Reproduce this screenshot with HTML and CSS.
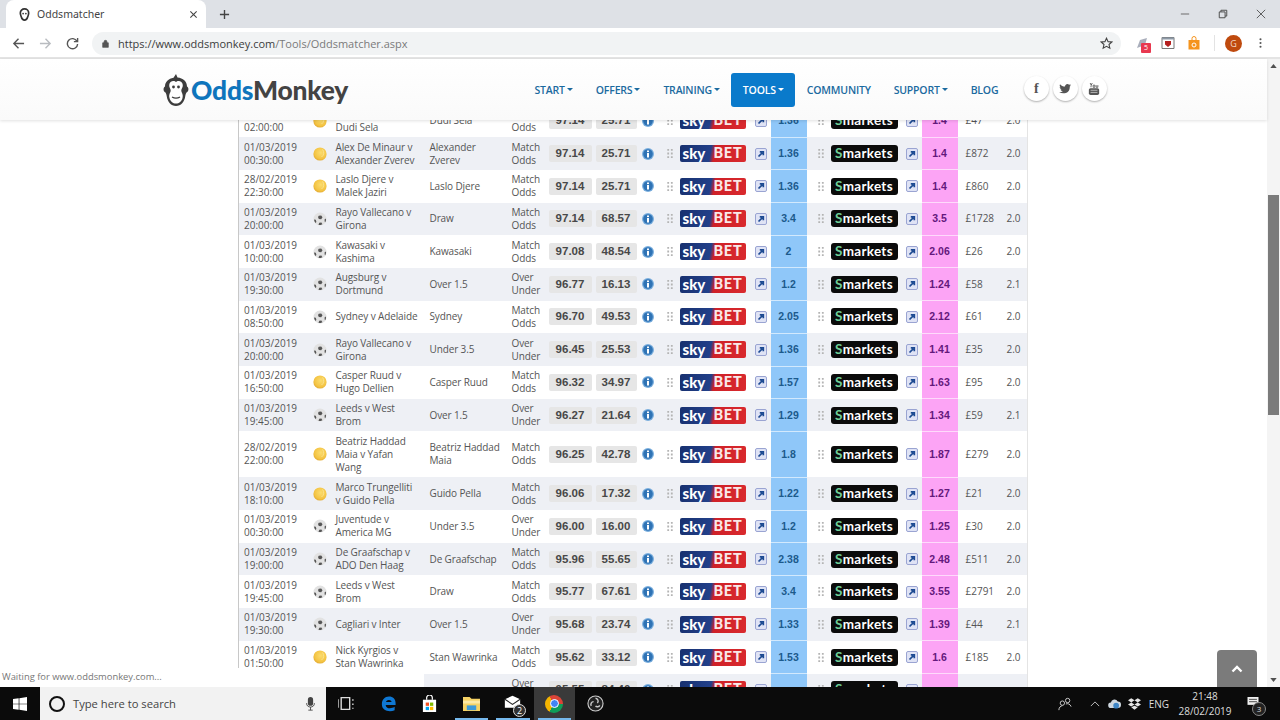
FILE: index.html
```html
<!DOCTYPE html>
<html lang="en">
<head>
    <meta charset="UTF-8">
    <title>Oddsmatcher</title>
    <link rel="stylesheet" href="styles.css">
</head>
<body>
    <svg class="defs" width="0" height="0">
        <symbol id="coin" viewBox="0 0 14 14">
            <defs><radialGradient id="coinfill" cx="55%" cy="40%" r="65%"><stop offset="0" stop-color="#fbdc6e"/><stop offset=".7" stop-color="#f4c443"/><stop offset="1" stop-color="#dfa52f"/></radialGradient></defs>
            <circle cx="7" cy="7" r="6.6" fill="url(#coinfill)"/>
            <path d="M9.5 2.5a5 5 0 0 1-1 7.5" fill="none" stroke="#fbe38e" stroke-width="1"/>
        </symbol>
        <symbol id="ball" viewBox="0 0 14 14">
            <circle cx="7" cy="7" r="6.5" fill="#e2e2e2"/>
            <path d="M5.8 3.800l2.400-.4 1.300 1.900-1.300 1.900-2.400-.2-.8-2zM1 7.500l1.800.2.600 2.200-1 1A6 6 0 0 1 1 7.500zM13 6.500l-1.500 1.100.3 2.400.5.200A6 6 0 0 0 13 6.500zM6.200 10.800l2.200-.2 1 1.600-1.700.9-2.200-.2z" fill="#555"/>
        </symbol>
        <symbol id="info" viewBox="0 0 12 12">
            <circle cx="6" cy="6" r="6" fill="#7aaedd"/>
            <circle cx="6" cy="6" r="4.800" fill="#2f73b5"/>
            <rect x="5" y="5" width="2" height="4.500" fill="#fff"/>
            <rect x="5" y="2.500" width="2" height="1.600" fill="#fff"/>
        </symbol>
        <symbol id="grip" viewBox="0 0 6 10">
            <path d="M0 0h2v2H0zM4 0h2v2H4zM0 4h2v2H0zM4 4h2v2H4zM0 8h2v2H0zM4 8h2v2H4z" fill="#b4b4b4"/>
        </symbol>
        <symbol id="out" viewBox="0 0 12 12">
            <rect x=".5" y=".5" width="11" height="11" rx="1.500" fill="#dfe3f5" stroke="#9aa4d2"/>
            <path d="M3.500 8.500l3.700-3.700M4.800 3.800H8.300V7.300" fill="none" stroke="#1c4a92" stroke-width="1.700"/>
        </symbol>
    </svg>

    <div class="tabbar">
        <div class="tab">
            <svg class="favicon" viewBox="0 0 14 14"><path d="M7 1a4.500 4.500 0 0 0-4.500 4.500c0 2 .7 3 1.200 4.500.5 2 1.700 3 3.300 3s2.800-1 3.300-3c.5-1.500 1.200-2.500 1.200-4.500A4.500 4.500 0 0 0 7 1z" fill="none" stroke="#333" stroke-width="1.800"/><circle cx="5.500" cy="6" r=".9" fill="#333"/><circle cx="8.500" cy="6" r=".9" fill="#333"/></svg>
            <span class="tab-title">Oddsmatcher</span>
            <svg class="tab-close" viewBox="0 0 10 10"><path d="M1.500 1.500l7 7M8.500 1.500l-7 7" stroke="#444" stroke-width="1.200"/></svg>
        </div>
        <svg class="newtab" viewBox="0 0 12 12"><path d="M6 1v10M1 6h10" stroke="#444" stroke-width="1.500"/></svg>
        <div class="winctl">
            <svg viewBox="0 0 12 12"><path d="M1 6h10" stroke="#555"/></svg>
            <svg viewBox="0 0 12 12"><path d="M1.500 3.500h7v7h-7zM3.500 3.500v-2h7v7h-2" fill="none" stroke="#444" stroke-width="1.100"/></svg>
            <svg viewBox="0 0 12 12"><path d="M1 1l10 10M11 1L1 11" stroke="#444"/></svg>
        </div>
    </div>

    <div class="toolbar">
        <svg class="tb-icon" viewBox="0 0 14 14"><path d="M13 7H2M7 2L2 7l5 5" fill="none" stroke="#555" stroke-width="1.500"/></svg>
        <svg class="tb-icon" viewBox="0 0 14 14"><path d="M1 7h11M7 2l5 5-5 5" fill="none" stroke="#b9bcc0" stroke-width="1.500"/></svg>
        <svg class="tb-icon" viewBox="0 0 14 14"><path d="M11.800 4.500A5.500 5.500 0 1 0 12.500 7.500M12.500 1v4h-4" fill="none" stroke="#555" stroke-width="1.500"/></svg>
        <div class="omnibox">
            <svg class="lock" viewBox="0 0 10 12"><path d="M1 5h8v6.500H1zM3 5V3.500a2 2 0 0 1 4 0V5" fill="#555" stroke="#555"/></svg>
            <span class="url"><span class="url-dark">https://www.oddsmonkey.com</span>/Tools/Oddsmatcher.aspx</span>
            <svg class="star" viewBox="0 0 14 14"><path d="M7 1.300l1.700 3.700 4 .4-3 2.700.9 4L7 10l-3.600 2.100.9-4-3-2.700 4-.4z" fill="none" stroke="#444" stroke-width="1.200"/></svg>
        </div>
        <div class="exts">
            <span class="ext-puzzle">
                <svg viewBox="0 0 14 14"><path d="M2 12L5 4l7-2-2 7z" fill="#a9aebb"/></svg>
                <span class="ext-count">5</span>
            </span>
            <svg class="ext" viewBox="0 0 14 14"><path d="M1 1.500h12v11H1z" fill="#fff" stroke="#777"/><path d="M1 1.500h12v2H1z" fill="#8d99a6"/><path d="M4 5h6v3.500L7 11 4 8.500z" fill="#b5201f"/></svg>
            <svg class="ext" viewBox="0 0 14 14"><path d="M1.500 4h11v9.500h-11z" fill="#f5941e"/><path d="M5 4.500V2.500a2 2 0 0 1 4 0v2" fill="none" stroke="#f5941e"/><circle cx="7" cy="9" r="2" fill="none" stroke="#fff"/></svg>
            <span class="tb-sep"></span>
            <span class="avatar">G</span>
            <svg class="kebab" viewBox="0 0 4 14"><circle cx="2" cy="2" r="1.400" fill="#555"/><circle cx="2" cy="7" r="1.400" fill="#555"/><circle cx="2" cy="12" r="1.400" fill="#555"/></svg>
        </div>
    </div>

    <div class="viewport">
        <div class="page">
            <header class="site-header">
                <a class="logo">
                    <svg class="monkey" viewBox="0 0 26 32"><path d="M13 0l1.500 3.500C20 4 24 7.500 24 12.500c2 1 2 5-.5 6-.5 1-1 2-1.200 3.500-.8 6-4.300 10-9.300 10S4.500 28 3.700 22c-.2-1.500-.7-2.500-1.200-3.500C0 17.500 0 13.500 2 12.500 2 8 5.500 4.500 10.500 3.800z" fill="#3d3d3d"/><path d="M13 8c-1.200-1.800-6.500-1.800-6.800 3-.2 2.500 1.500 3.500 1.500 5.500S5.500 20 6.500 24c.8 3.500 3.500 5.500 6.500 5.500s5.700-2 6.500-5.500c1-4-1.200-5.500-1.200-7.500s1.700-3 1.500-5.500C19.500 6.200 14.200 6.200 13 8z" fill="#fff"/><circle cx="10.500" cy="13" r="1.400" fill="#3d3d3d"/><circle cx="15.500" cy="13" r="1.400" fill="#3d3d3d"/><path d="M9 23c2.500 1.500 5.500 1.500 8 0" fill="none" stroke="#3d3d3d" stroke-width="1.200"/></svg>
                    <span class="logo-text"><span class="logo-blue">Odds</span>Monkey</span>
                </a>
                <nav class="nav">
                    <a class="nav-link caret">START</a>
                    <a class="nav-link caret">OFFERS</a>
                    <a class="nav-link caret">TRAINING</a>
                    <a class="nav-link caret active">TOOLS</a>
                    <a class="nav-link">COMMUNITY</a>
                    <a class="nav-link caret">SUPPORT</a>
                    <a class="nav-link">BLOG</a>
                </nav>
                <div class="social">
                    <span class="social-btn social-f">f</span>
                    <span class="social-btn"><svg viewBox="0 0 14 12"><path d="M14 1.500c-.5.300-1 .4-1.600.5.600-.4 1-.9 1.200-1.600-.5.300-1.100.6-1.800.7A2.800 2.800 0 0 0 7 3.200C4.700 3.100 2.600 2 1.200.4c-.8 1.300-.4 3 .9 3.800-.5 0-.9-.1-1.300-.4 0 1.400 1 2.500 2.300 2.800-.4.100-.9.100-1.300 0 .4 1.100 1.400 1.900 2.700 2-1.300 1-2.800 1.400-4.500 1.200C5.900 12.800 13 10.500 12.600 3c.6-.4 1-.9 1.400-1.500z" fill="#555"/></svg></span>
                    <span class="social-btn"><svg viewBox="0 0 12 14"><rect x="0" y="6" width="12" height="8" rx="2" fill="#555"/><path d="M1.500 0l1.200 2.500L4 0M3 3h-.500v2M5 2.500h2V5H5zM8.500 2.500V5h2V2.500" fill="none" stroke="#555"/><path d="M2 8.500h8M2 11h8" stroke="#ddd" stroke-width=".8"/></svg></span>
                </div>
            </header>
            <main class="content">
                <table class="odds">
                    <colgroup>
                        <col class="c-date"><col class="c-sport"><col class="c-event"><col class="c-sel"><col class="c-market"><col class="c-rating"><col class="c-back"><col class="c-price"><col class="c-lay"><col class="c-price"><col class="c-stake"><col class="c-ver">
                    </colgroup>
                    <tbody>
                        <tr><td class="t-date">01/03/2019<br>02:00:00</td><td class="t-sport"><svg><use href="#coin"/></svg></td><td class="t-text t-event">&nbsp;<br>Dudi Sela</td><td class="t-text">Dudi Sela</td><td class="t-text">Match Odds</td><td><div class="rating"><span>97.14</span><span>25.71</span></div></td><td><div class="back"><svg class="i-info"><use href="#info"/></svg><svg class="i-grip"><use href="#grip"/></svg><span class="sky"><span>sky</span><b>BET</b></span><svg class="i-out"><use href="#out"/></svg></div></td><td class="t-back">1.36</td><td><div class="lay"><svg class="i-grip"><use href="#grip"/></svg><span class="smarkets"><em>S</em>markets</span><svg class="i-out"><use href="#out"/></svg></div></td><td class="t-lay">1.4</td><td class="t-stake">£47</td><td class="t-ver">2.0</td></tr>
                        <tr><td class="t-date">01/03/2019<br>00:30:00</td><td class="t-sport"><svg><use href="#coin"/></svg></td><td class="t-text t-event">Alex De Minaur v Alexander Zverev</td><td class="t-text">Alexander Zverev</td><td class="t-text">Match Odds</td><td><div class="rating"><span>97.14</span><span>25.71</span></div></td><td><div class="back"><svg class="i-info"><use href="#info"/></svg><svg class="i-grip"><use href="#grip"/></svg><span class="sky"><span>sky</span><b>BET</b></span><svg class="i-out"><use href="#out"/></svg></div></td><td class="t-back">1.36</td><td><div class="lay"><svg class="i-grip"><use href="#grip"/></svg><span class="smarkets"><em>S</em>markets</span><svg class="i-out"><use href="#out"/></svg></div></td><td class="t-lay">1.4</td><td class="t-stake">£872</td><td class="t-ver">2.0</td></tr>
                        <tr><td class="t-date">28/02/2019<br>22:30:00</td><td class="t-sport"><svg><use href="#coin"/></svg></td><td class="t-text t-event">Laslo Djere v Malek Jaziri</td><td class="t-text">Laslo Djere</td><td class="t-text">Match Odds</td><td><div class="rating"><span>97.14</span><span>25.71</span></div></td><td><div class="back"><svg class="i-info"><use href="#info"/></svg><svg class="i-grip"><use href="#grip"/></svg><span class="sky"><span>sky</span><b>BET</b></span><svg class="i-out"><use href="#out"/></svg></div></td><td class="t-back">1.36</td><td><div class="lay"><svg class="i-grip"><use href="#grip"/></svg><span class="smarkets"><em>S</em>markets</span><svg class="i-out"><use href="#out"/></svg></div></td><td class="t-lay">1.4</td><td class="t-stake">£860</td><td class="t-ver">2.0</td></tr>
                        <tr><td class="t-date">01/03/2019<br>20:00:00</td><td class="t-sport"><svg><use href="#ball"/></svg></td><td class="t-text t-event">Rayo Vallecano v Girona</td><td class="t-text">Draw</td><td class="t-text">Match Odds</td><td><div class="rating"><span>97.14</span><span>68.57</span></div></td><td><div class="back"><svg class="i-info"><use href="#info"/></svg><svg class="i-grip"><use href="#grip"/></svg><span class="sky"><span>sky</span><b>BET</b></span><svg class="i-out"><use href="#out"/></svg></div></td><td class="t-back">3.4</td><td><div class="lay"><svg class="i-grip"><use href="#grip"/></svg><span class="smarkets"><em>S</em>markets</span><svg class="i-out"><use href="#out"/></svg></div></td><td class="t-lay">3.5</td><td class="t-stake">£1728</td><td class="t-ver">2.0</td></tr>
                        <tr><td class="t-date">01/03/2019<br>10:00:00</td><td class="t-sport"><svg><use href="#ball"/></svg></td><td class="t-text t-event">Kawasaki v Kashima</td><td class="t-text">Kawasaki</td><td class="t-text">Match Odds</td><td><div class="rating"><span>97.08</span><span>48.54</span></div></td><td><div class="back"><svg class="i-info"><use href="#info"/></svg><svg class="i-grip"><use href="#grip"/></svg><span class="sky"><span>sky</span><b>BET</b></span><svg class="i-out"><use href="#out"/></svg></div></td><td class="t-back">2</td><td><div class="lay"><svg class="i-grip"><use href="#grip"/></svg><span class="smarkets"><em>S</em>markets</span><svg class="i-out"><use href="#out"/></svg></div></td><td class="t-lay">2.06</td><td class="t-stake">£26</td><td class="t-ver">2.0</td></tr>
                        <tr><td class="t-date">01/03/2019<br>19:30:00</td><td class="t-sport"><svg><use href="#ball"/></svg></td><td class="t-text t-event">Augsburg v Dortmund</td><td class="t-text">Over 1.5</td><td class="t-text">Over Under</td><td><div class="rating"><span>96.77</span><span>16.13</span></div></td><td><div class="back"><svg class="i-info"><use href="#info"/></svg><svg class="i-grip"><use href="#grip"/></svg><span class="sky"><span>sky</span><b>BET</b></span><svg class="i-out"><use href="#out"/></svg></div></td><td class="t-back">1.2</td><td><div class="lay"><svg class="i-grip"><use href="#grip"/></svg><span class="smarkets"><em>S</em>markets</span><svg class="i-out"><use href="#out"/></svg></div></td><td class="t-lay">1.24</td><td class="t-stake">£58</td><td class="t-ver">2.1</td></tr>
                        <tr><td class="t-date">01/03/2019<br>08:50:00</td><td class="t-sport"><svg><use href="#ball"/></svg></td><td class="t-text t-event">Sydney v Adelaide</td><td class="t-text">Sydney</td><td class="t-text">Match Odds</td><td><div class="rating"><span>96.70</span><span>49.53</span></div></td><td><div class="back"><svg class="i-info"><use href="#info"/></svg><svg class="i-grip"><use href="#grip"/></svg><span class="sky"><span>sky</span><b>BET</b></span><svg class="i-out"><use href="#out"/></svg></div></td><td class="t-back">2.05</td><td><div class="lay"><svg class="i-grip"><use href="#grip"/></svg><span class="smarkets"><em>S</em>markets</span><svg class="i-out"><use href="#out"/></svg></div></td><td class="t-lay">2.12</td><td class="t-stake">£61</td><td class="t-ver">2.0</td></tr>
                        <tr><td class="t-date">01/03/2019<br>20:00:00</td><td class="t-sport"><svg><use href="#ball"/></svg></td><td class="t-text t-event">Rayo Vallecano v Girona</td><td class="t-text">Under 3.5</td><td class="t-text">Over Under</td><td><div class="rating"><span>96.45</span><span>25.53</span></div></td><td><div class="back"><svg class="i-info"><use href="#info"/></svg><svg class="i-grip"><use href="#grip"/></svg><span class="sky"><span>sky</span><b>BET</b></span><svg class="i-out"><use href="#out"/></svg></div></td><td class="t-back">1.36</td><td><div class="lay"><svg class="i-grip"><use href="#grip"/></svg><span class="smarkets"><em>S</em>markets</span><svg class="i-out"><use href="#out"/></svg></div></td><td class="t-lay">1.41</td><td class="t-stake">£35</td><td class="t-ver">2.0</td></tr>
                        <tr><td class="t-date">01/03/2019<br>16:50:00</td><td class="t-sport"><svg><use href="#coin"/></svg></td><td class="t-text t-event">Casper Ruud v Hugo Dellien</td><td class="t-text">Casper Ruud</td><td class="t-text">Match Odds</td><td><div class="rating"><span>96.32</span><span>34.97</span></div></td><td><div class="back"><svg class="i-info"><use href="#info"/></svg><svg class="i-grip"><use href="#grip"/></svg><span class="sky"><span>sky</span><b>BET</b></span><svg class="i-out"><use href="#out"/></svg></div></td><td class="t-back">1.57</td><td><div class="lay"><svg class="i-grip"><use href="#grip"/></svg><span class="smarkets"><em>S</em>markets</span><svg class="i-out"><use href="#out"/></svg></div></td><td class="t-lay">1.63</td><td class="t-stake">£95</td><td class="t-ver">2.0</td></tr>
                        <tr><td class="t-date">01/03/2019<br>19:45:00</td><td class="t-sport"><svg><use href="#ball"/></svg></td><td class="t-text t-event">Leeds v West Brom</td><td class="t-text">Over 1.5</td><td class="t-text">Over Under</td><td><div class="rating"><span>96.27</span><span>21.64</span></div></td><td><div class="back"><svg class="i-info"><use href="#info"/></svg><svg class="i-grip"><use href="#grip"/></svg><span class="sky"><span>sky</span><b>BET</b></span><svg class="i-out"><use href="#out"/></svg></div></td><td class="t-back">1.29</td><td><div class="lay"><svg class="i-grip"><use href="#grip"/></svg><span class="smarkets"><em>S</em>markets</span><svg class="i-out"><use href="#out"/></svg></div></td><td class="t-lay">1.34</td><td class="t-stake">£59</td><td class="t-ver">2.1</td></tr>
                        <tr class="tall"><td class="t-date">28/02/2019<br>22:00:00</td><td class="t-sport"><svg><use href="#coin"/></svg></td><td class="t-text t-event">Beatriz Haddad<br>Maia v Yafan<br>Wang</td><td class="t-text">Beatriz Haddad Maia</td><td class="t-text">Match Odds</td><td><div class="rating"><span>96.25</span><span>42.78</span></div></td><td><div class="back"><svg class="i-info"><use href="#info"/></svg><svg class="i-grip"><use href="#grip"/></svg><span class="sky"><span>sky</span><b>BET</b></span><svg class="i-out"><use href="#out"/></svg></div></td><td class="t-back">1.8</td><td><div class="lay"><svg class="i-grip"><use href="#grip"/></svg><span class="smarkets"><em>S</em>markets</span><svg class="i-out"><use href="#out"/></svg></div></td><td class="t-lay">1.87</td><td class="t-stake">£279</td><td class="t-ver">2.0</td></tr>
                        <tr><td class="t-date">01/03/2019<br>18:10:00</td><td class="t-sport"><svg><use href="#coin"/></svg></td><td class="t-text t-event">Marco Trungelliti<br>v Guido Pella</td><td class="t-text">Guido Pella</td><td class="t-text">Match Odds</td><td><div class="rating"><span>96.06</span><span>17.32</span></div></td><td><div class="back"><svg class="i-info"><use href="#info"/></svg><svg class="i-grip"><use href="#grip"/></svg><span class="sky"><span>sky</span><b>BET</b></span><svg class="i-out"><use href="#out"/></svg></div></td><td class="t-back">1.22</td><td><div class="lay"><svg class="i-grip"><use href="#grip"/></svg><span class="smarkets"><em>S</em>markets</span><svg class="i-out"><use href="#out"/></svg></div></td><td class="t-lay">1.27</td><td class="t-stake">£21</td><td class="t-ver">2.0</td></tr>
                        <tr><td class="t-date">01/03/2019<br>00:30:00</td><td class="t-sport"><svg><use href="#ball"/></svg></td><td class="t-text t-event">Juventude v America MG</td><td class="t-text">Under 3.5</td><td class="t-text">Over Under</td><td><div class="rating"><span>96.00</span><span>16.00</span></div></td><td><div class="back"><svg class="i-info"><use href="#info"/></svg><svg class="i-grip"><use href="#grip"/></svg><span class="sky"><span>sky</span><b>BET</b></span><svg class="i-out"><use href="#out"/></svg></div></td><td class="t-back">1.2</td><td><div class="lay"><svg class="i-grip"><use href="#grip"/></svg><span class="smarkets"><em>S</em>markets</span><svg class="i-out"><use href="#out"/></svg></div></td><td class="t-lay">1.25</td><td class="t-stake">£30</td><td class="t-ver">2.0</td></tr>
                        <tr><td class="t-date">01/03/2019<br>19:00:00</td><td class="t-sport"><svg><use href="#ball"/></svg></td><td class="t-text t-event">De Graafschap v ADO Den Haag</td><td class="t-text">De Graafschap</td><td class="t-text">Match Odds</td><td><div class="rating"><span>95.96</span><span>55.65</span></div></td><td><div class="back"><svg class="i-info"><use href="#info"/></svg><svg class="i-grip"><use href="#grip"/></svg><span class="sky"><span>sky</span><b>BET</b></span><svg class="i-out"><use href="#out"/></svg></div></td><td class="t-back">2.38</td><td><div class="lay"><svg class="i-grip"><use href="#grip"/></svg><span class="smarkets"><em>S</em>markets</span><svg class="i-out"><use href="#out"/></svg></div></td><td class="t-lay">2.48</td><td class="t-stake">£511</td><td class="t-ver">2.0</td></tr>
                        <tr><td class="t-date">01/03/2019<br>19:45:00</td><td class="t-sport"><svg><use href="#ball"/></svg></td><td class="t-text t-event">Leeds v West Brom</td><td class="t-text">Draw</td><td class="t-text">Match Odds</td><td><div class="rating"><span>95.77</span><span>67.61</span></div></td><td><div class="back"><svg class="i-info"><use href="#info"/></svg><svg class="i-grip"><use href="#grip"/></svg><span class="sky"><span>sky</span><b>BET</b></span><svg class="i-out"><use href="#out"/></svg></div></td><td class="t-back">3.4</td><td><div class="lay"><svg class="i-grip"><use href="#grip"/></svg><span class="smarkets"><em>S</em>markets</span><svg class="i-out"><use href="#out"/></svg></div></td><td class="t-lay">3.55</td><td class="t-stake">£2791</td><td class="t-ver">2.0</td></tr>
                        <tr><td class="t-date">01/03/2019<br>19:30:00</td><td class="t-sport"><svg><use href="#ball"/></svg></td><td class="t-text t-event">Cagliari v Inter</td><td class="t-text">Over 1.5</td><td class="t-text">Over Under</td><td><div class="rating"><span>95.68</span><span>23.74</span></div></td><td><div class="back"><svg class="i-info"><use href="#info"/></svg><svg class="i-grip"><use href="#grip"/></svg><span class="sky"><span>sky</span><b>BET</b></span><svg class="i-out"><use href="#out"/></svg></div></td><td class="t-back">1.33</td><td><div class="lay"><svg class="i-grip"><use href="#grip"/></svg><span class="smarkets"><em>S</em>markets</span><svg class="i-out"><use href="#out"/></svg></div></td><td class="t-lay">1.39</td><td class="t-stake">£44</td><td class="t-ver">2.1</td></tr>
                        <tr><td class="t-date">01/03/2019<br>01:50:00</td><td class="t-sport"><svg><use href="#coin"/></svg></td><td class="t-text t-event">Nick Kyrgios v<br>Stan Wawrinka</td><td class="t-text">Stan Wawrinka</td><td class="t-text">Match Odds</td><td><div class="rating"><span>95.62</span><span>33.12</span></div></td><td><div class="back"><svg class="i-info"><use href="#info"/></svg><svg class="i-grip"><use href="#grip"/></svg><span class="sky"><span>sky</span><b>BET</b></span><svg class="i-out"><use href="#out"/></svg></div></td><td class="t-back">1.53</td><td><div class="lay"><svg class="i-grip"><use href="#grip"/></svg><span class="smarkets"><em>S</em>markets</span><svg class="i-out"><use href="#out"/></svg></div></td><td class="t-lay">1.6</td><td class="t-stake">£185</td><td class="t-ver">2.0</td></tr>
                        <tr><td class="t-date"></td><td class="t-sport"><svg><use href="#ball"/></svg></td><td class="t-text t-event"></td><td class="t-text"></td><td class="t-text">Over Under</td><td><div class="rating"><span>95.55</span><span>84.40</span></div></td><td><div class="back"><svg class="i-info"><use href="#info"/></svg><svg class="i-grip"><use href="#grip"/></svg><span class="sky"><span>sky</span><b>BET</b></span><svg class="i-out"><use href="#out"/></svg></div></td><td class="t-back"></td><td><div class="lay"><svg class="i-grip"><use href="#grip"/></svg><span class="smarkets"><em>S</em>markets</span><svg class="i-out"><use href="#out"/></svg></div></td><td class="t-lay"></td><td class="t-stake"></td><td class="t-ver"></td></tr>
                    </tbody>
                </table>
            </main>
            <div class="status-bubble">Waiting for www.oddsmonkey.com...</div>
            <a class="to-top"><svg viewBox="0 0 12 8"><path d="M1.500 6.500L6 2l4.500 4.500" fill="none" stroke="#fff" stroke-width="2.400"/></svg></a>
        </div>
        <div class="scrollbar">
            <svg class="sb-arrow" viewBox="0 0 8 5"><path d="M0 5l4-5 4 5z" fill="#505050"/></svg>
            <div class="sb-track"><div class="sb-thumb"></div></div>
            <svg class="sb-arrow" viewBox="0 0 8 5"><path d="M0 0l4 5 4-5z" fill="#505050"/></svg>
        </div>
    </div>

    <footer class="taskbar">
        <div class="start"><svg viewBox="0 0 16 16"><path d="M0 2.300l6.500-.9v6.200H0zM7.300 1.300L16 0v7.600H7.300zM0 8.400h6.500v6.200L0 13.700zM7.300 8.400H16V16l-8.700-1.300z" fill="#fff"/></svg></div>
        <div class="search">
            <span class="cortana"></span>
            <span class="search-text">Type here to search</span>
            <svg class="mic" viewBox="0 0 10 16"><rect x="2" y="0" width="6" height="10" rx="3" fill="#444"/><path d="M.5 7c0 3 2 4.500 4.500 4.500S9.500 10 9.500 7M5 11.500V15M2.500 15h5" fill="none" stroke="#444"/></svg>
        </div>
        <div class="apps">
            <span class="app"><svg viewBox="0 0 16 16"><path d="M3 2.500h8v11H3zM0 4v8M14 4v1.500M14 8v1.500M14 12v1" fill="none" stroke="#ddd" stroke-width="1.300"/></svg></span>
            <span class="app"><svg viewBox="0 0 18 18"><path d="M2 9.500C2 5 5 1.500 9.500 1.500S17 4.500 16.500 10.500H6c.3 4 5.500 4.500 9.500 2v3.700C9.500 18.500 1.500 16.500 2 9.500zM6.300 7.500h6C12 4.500 7 4.500 6.300 7.500z" fill="#0f78d4"/></svg></span>
            <span class="app"><svg viewBox="0 0 18 18"><path d="M2 5h14v13H2z" fill="#fff"/><path d="M6 5V3a3 3 0 0 1 6 0v2" fill="none" stroke="#fff" stroke-width="1.300"/><path d="M5 8h3.500v3.500H5z" fill="#f25022"/><path d="M9.500 8H13v3.500H9.500z" fill="#7fba00"/><path d="M5 12.500h3.500V16H5z" fill="#00a4ef"/><path d="M9.500 12.500H13V16H9.500z" fill="#ffb900"/></svg></span>
            <span class="app running"><svg viewBox="0 0 18 16"><path d="M0 1h7l2 2h9v13H0z" fill="#f6d365"/><path d="M0 5h18v3H0z" fill="#fbe9a6"/><path d="M4 10h10v5H4z" fill="#3d9ad8"/></svg></span>
            <span class="app running"><svg viewBox="0 0 20 18"><path d="M1 4L10 0l9 4v10H1z" fill="#fff"/><path d="M1 4l9 6 9-6" fill="none" stroke="#222" stroke-width="1.200"/></svg><span class="app-badge">2</span></span>
            <span class="app running current"><span class="chrome"></span></span>
            <span class="app"><svg viewBox="0 0 18 18"><circle cx="9" cy="9" r="8" fill="#222" stroke="#ccc" stroke-width="1.200"/><path d="M9 3.500a3 3 0 0 1 2 5M13.500 11a3 3 0 0 1-4.500 .8M4.500 11.500A3 3 0 0 1 7 7" fill="none" stroke="#ccc" stroke-width="1.500"/></svg></span>
        </div>
        <div class="tray">
            <svg class="tray-people" viewBox="0 0 16 16"><circle cx="11" cy="4" r="2.500" fill="none" stroke="#ddd"/><circle cx="5" cy="7" r="2.500" fill="none" stroke="#ddd"/><path d="M1 15c0-3 2-5 4-5M9 8c2-1 5 0 6 3" fill="none" stroke="#ddd"/></svg>
            <svg class="tray-chevron" viewBox="0 0 12 7"><path d="M1 6l5-5 5 5" fill="none" stroke="#ddd"/></svg>
            <svg class="tray-icon" viewBox="0 0 16 14"><path d="M4 12a3.500 3.500 0 0 1-.5-7A4.500 4.500 0 0 1 12 4a4 4 0 0 1 0 8z" fill="#cfd8e0"/><circle cx="10" cy="9" r="3.500" fill="#3f86c6"/></svg>
            <svg class="tray-icon" viewBox="0 0 16 14"><path d="M4 0l4 2.500L4 5 0 2.500zM12 0l4 2.500L12 5 8 2.500zM4 5l4 2.500L4 10 0 7.500zM12 5l4 2.500-4 2.500-4-2.500zM4 11l4-2 4 2-4 3z" fill="#e6e6e6"/></svg>
            <span class="lang">ENG</span>
            <div class="clock"><span>21:48</span><span>28/02/2019</span></div>
            <span class="notif">
                <svg viewBox="0 0 14 14"><path d="M0 0h14v10H0z" fill="#eee"/><path d="M2 3h10M2 6h10" stroke="#222"/></svg>
                <span class="notif-count">3</span>
            </span>
        </div>
    </footer>
</body>
</html>
```

FILE: styles.css
```css
html, body {
    margin: 0;
    height: 720px;
    overflow: hidden;
}
body {
    display: flex;
    flex-direction: column;
    width: 1280px;
    font-family: 'Open Sans', sans-serif;
    background-color: #fff;
}
.defs {
    position: absolute;
}
svg {
    display: block;
    flex: none;
}
a {
    color: inherit;
    text-decoration: none;
}

/* browser chrome */
.tabbar {
    display: flex;
    align-items: stretch;
    height: 28px;
    padding-left: 6px;
    background-color: #dee1e6;
}
.tab {
    display: flex;
    align-items: center;
    box-sizing: border-box;
    width: 200px;
    padding: 0 8px 0 12px;
    border-radius: 8px 8px 0 0;
    background-color: #fff;
}
.favicon {
    width: 13px;
    height: 13px;
}
.tab-title {
    flex: 1;
    margin-left: 6px;
    font-family: 'Noto Sans', sans-serif;
    font-size: 10.5px;
    color: #444;
}
.tab-close {
    width: 9px;
    height: 9px;
}
.newtab {
    align-self: center;
    width: 11px;
    height: 11px;
    margin-left: 13px;
}
.winctl {
    display: flex;
    align-items: center;
    gap: 28px;
    margin-left: auto;
    padding-right: 14px;
}
.winctl svg {
    width: 10px;
    height: 10px;
}
.toolbar {
    display: flex;
    align-items: center;
    height: 31px;
    box-sizing: border-box;
    padding: 1px 0 0 12px;
    border-bottom: 2px solid #e4e4e4;
    background-color: #fff;
}
.tb-icon {
    width: 13px;
    height: 13px;
    margin-right: 14px;
}
.omnibox {
    display: flex;
    align-items: center;
    box-sizing: border-box;
    width: 1029px;
    height: 23px;
    margin-left: -1px;
    padding: 0 8px 0 10px;
    border-radius: 12px;
    background-color: #f1f3f4;
}
.lock {
    width: 7px;
    height: 9px;
}
.url {
    flex: 1;
    margin-left: 9px;
    font-size: 11px;
    color: #7a7a7a;
}
.url-dark {
    color: #3c3c3c;
}
.star {
    width: 13px;
    height: 13px;
}
.exts {
    display: flex;
    align-items: center;
    padding-left: 14px;
}
.ext-puzzle {
    position: relative;
    width: 14px;
    height: 14px;
}
.ext-count {
    position: absolute;
    left: 6px;
    top: 7px;
    width: 10px;
    height: 10px;
    border-radius: 1px;
    background-color: #e8384f;
    color: #fff;
    font-size: 7px;
    line-height: 10px;
    text-align: center;
}
.ext {
    width: 14px;
    height: 14px;
    margin-left: 12px;
}
.tb-sep {
    width: 1px;
    height: 16px;
    margin-left: 13px;
    background-color: #e3e3e3;
}
.avatar {
    width: 17px;
    height: 17px;
    margin-left: 10px;
    border-radius: 50%;
    background-color: #bf4a0e;
    color: #f3d9c9;
    font-size: 9px;
    line-height: 17px;
    text-align: center;
}
.kebab {
    width: 3px;
    height: 12px;
    margin-left: 17px;
}

/* page */
.viewport {
    display: flex;
    height: 628px;
    min-height: 0;
}
.page {
    position: relative;
    display: flex;
    flex-direction: column;
    flex: 1;
    min-width: 0;
}
.site-header {
    position: relative;
    z-index: 2;
    display: flex;
    align-items: center;
    flex: none;
    box-sizing: border-box;
    height: 61px;
    padding-left: 163px;
    background: linear-gradient(#fff, #fafafa);
    box-shadow: 0 1px 3px rgba(0, 0, 0, 0.12);
}
.logo {
    display: flex;
    align-items: center;
    width: 185px;
}
.monkey {
    width: 26px;
    height: 32px;
}
.logo-text {
    margin-left: 2px;
    font-family: 'Lato', sans-serif;
    font-size: 26.4px;
    font-weight: 900;
    letter-spacing: -0.2px;
    color: #434343;
}
.logo-blue {
    color: #0f75bc;
}
.nav {
    display: flex;
    align-items: center;
    margin-left: 175px;
    font-size: 10.5px;
    font-weight: 600;
    letter-spacing: -0.2px;
    color: #1b6a9f;
}
.nav-link {
    display: flex;
    align-items: center;
    height: 34px;
    padding: 0 11.5px;
    border-radius: 3px;
}
.nav-link.caret::after {
    content: '';
    margin-left: 2px;
    border: 3px solid transparent;
    border-top-color: currentColor;
    border-bottom-width: 0;
}
.nav-link.active {
    background-color: #0a7acb;
    color: #fff;
}
.social {
    display: flex;
    gap: 4px;
    margin: -2px 0 0 14px;
}
.social-btn {
    display: flex;
    align-items: center;
    justify-content: center;
    width: 25px;
    height: 25px;
    border-radius: 50%;
    background-color: #fff;
    box-shadow: 0 1px 2px rgba(0, 0, 0, 0.3);
    color: #555;
}
.social-btn svg {
    width: 12px;
    height: 12px;
}
.social-f {
    font-family: 'Liberation Serif', serif;
    font-size: 14px;
    font-weight: bold;
}
.content {
    flex: 1;
    min-height: 0;
    overflow: hidden;
}
.odds {
    table-layout: fixed;
    width: 789px;
    margin: -16px 0 0 238px;
    border-collapse: collapse;
    border-left: 1px solid #c8c8c8;
    border-right: 1px solid #e4e4e4;
    font-size: 10px;
    line-height: 13px;
    color: #555;
}
.c-date { width: 73px; }
.c-sport { width: 18px; }
.c-event { width: 94px; }
.c-sel { width: 82px; }
.c-market { width: 39px; }
.c-rating { width: 95px; }
.c-back { width: 131px; }
.c-price { width: 36px; }
.c-lay { width: 115px; }
.c-stake { width: 47px; }
.c-ver { width: 23px; }
.odds tr {
    height: 32.7px;
}
.odds tr.tall {
    height: 46px;
}
.odds tr:nth-child(even) {
    background-color: #eef0f5;
}
.odds td {
    padding: 0;
    vertical-align: middle;
}
.t-date {
    padding-left: 5px !important;
}
.t-sport svg {
    width: 14px;
    height: 14px;
    margin-left: 1px;
}
.t-text {
    padding-left: 6px !important;
    letter-spacing: -0.12px;
}
.t-event {
    padding-right: 5px !important;
}
.rating {
    display: flex;
    gap: 4px;
    padding-left: 4px;
    font-family: 'Liberation Sans', sans-serif;
    font-size: 11.5px;
    font-weight: bold;
    color: #484848;
}
.rating span {
    width: 41px;
    height: 17px;
    border-radius: 2px;
    background-color: #e6e6e6;
    line-height: 17px;
    text-align: center;
}
.rating span:first-child {
    width: 43px;
}
.back, .lay {
    display: flex;
    align-items: center;
}
.i-info {
    width: 12px;
    height: 12px;
    margin-left: 2px;
}
.i-grip {
    width: 6px;
    height: 9px;
}
.back .i-grip {
    margin-left: 13px;
}
.lay .i-grip {
    margin-left: 11px;
}
.i-out {
    width: 12px;
    height: 12px;
}
.back .i-out {
    margin-left: 9px;
}
.lay .i-out {
    margin-left: 8px;
}
.sky {
    display: flex;
    justify-content: space-between;
    box-sizing: border-box;
    width: 66px;
    height: 17px;
    margin-left: 7px;
    padding: 0 3px;
    border-radius: 2px;
    background: linear-gradient(100deg, #17306f 0, #22408a 46%, #cf2027 52%, #d92a2e 100%);
    font-family: 'Lato', sans-serif;
    color: #fff;
    line-height: 16px;
    overflow: hidden;
}
.sky span {
    font-size: 15px;
    font-weight: 900;
}
.sky b {
    font-size: 14.5px;
    font-weight: 900;
    letter-spacing: 0.8px;
    color: #f9e8e8;
}
.smarkets {
    width: 67px;
    height: 17px;
    margin-left: 7px;
    border-radius: 3px;
    background-color: #0b0b0b;
    font-family: 'Lato', sans-serif;
    font-size: 13.5px;
    font-weight: 700;
    letter-spacing: 0.3px;
    line-height: 16px;
    text-align: center;
    color: #fff;
}
.smarkets em {
    font-style: normal;
    color: #6fcf97;
}
.t-back, .t-lay {
    border-top: 1px solid rgba(255, 255, 255, 0.6);
    font-family: 'Liberation Sans', sans-serif;
    font-size: 10.5px;
    font-weight: bold;
    text-align: center;
}
.t-back {
    background-color: #8fc7f9;
    color: #1c5a8c;
}
.t-lay {
    background-color: #fca4f5;
    color: #64187c;
}
.t-stake {
    padding-left: 8px !important;
}
.t-ver {
    padding-left: 2px !important;
}
.status-bubble {
    position: absolute;
    z-index: 3;
    left: 0;
    bottom: 0;
    box-sizing: border-box;
    width: 424px;
    height: 19px;
    padding-left: 2px;
    background-color: #fff;
    font-size: 9.4px;
    line-height: 18px;
    color: #777;
}
.to-top {
    position: absolute;
    z-index: 3;
    right: 10px;
    bottom: 0;
    display: flex;
    align-items: center;
    justify-content: center;
    width: 40px;
    height: 37px;
    border-radius: 4px 4px 0 0;
    background-color: #7b7b7b;
}
.to-top svg {
    width: 12px;
    height: 8px;
}
.scrollbar {
    display: flex;
    flex-direction: column;
    align-items: center;
    flex: none;
    width: 13px;
    background-color: #f4f4f4;
}
.sb-arrow {
    flex: none;
    width: 7px;
    height: 4px;
    margin: 5px 0;
}
.sb-track {
    flex: 1;
    align-self: stretch;
    padding: 122px 1px 0;
}
.sb-thumb {
    height: 220px;
    background-color: #7b7b7b;
}

/* windows taskbar */
.taskbar {
    display: flex;
    align-items: center;
    flex: none;
    height: 33px;
    background-color: #0b0b0b;
}
.start {
    display: flex;
    align-items: center;
    justify-content: center;
    width: 40px;
}
.start svg {
    width: 14px;
    height: 14px;
}
.search {
    display: flex;
    align-items: center;
    box-sizing: border-box;
    width: 286px;
    height: 33px;
    padding: 0 11px 0 9px;
    background-color: #f2f2f2;
}
.cortana {
    box-sizing: border-box;
    width: 16px;
    height: 16px;
    border: 2.5px solid #111;
    border-radius: 50%;
}
.search-text {
    flex: 1;
    margin-left: 8px;
    font-size: 11.2px;
    color: #444;
}
.mic {
    width: 9px;
    height: 14px;
}
.apps {
    display: flex;
    height: 33px;
}
.app {
    position: relative;
    display: flex;
    align-items: center;
    justify-content: center;
    box-sizing: border-box;
    width: 41.5px;
}
.app svg {
    width: 17px;
    height: 17px;
}
.app.running::after {
    content: '';
    position: absolute;
    left: 4px;
    right: 4px;
    bottom: 0;
    height: 2px;
    background-color: #76b9ed;
}
.app.current {
    background-color: #3a3a3a;
}
.app-badge {
    position: absolute;
    left: 21px;
    top: 17px;
    box-sizing: border-box;
    width: 13px;
    height: 13px;
    border: 1px solid #ddd;
    border-radius: 50%;
    background-color: #333;
    color: #fff;
    font-size: 9px;
    line-height: 11px;
    text-align: center;
}
.chrome {
    position: relative;
    width: 18px;
    height: 18px;
    border-radius: 50%;
    background: conic-gradient(from -30deg, #db4437 0 120deg, #0f9d58 120deg 240deg, #f4b400 240deg 360deg);
}
.chrome::after {
    content: '';
    position: absolute;
    left: 4.5px;
    top: 4.5px;
    box-sizing: border-box;
    width: 9px;
    height: 9px;
    border: 1px solid #fff;
    border-radius: 50%;
    background-color: #4285f4;
}
.tray {
    display: flex;
    align-items: center;
    margin-left: auto;
    color: #ddd;
}
.tray-people {
    width: 14px;
    height: 14px;
}
.tray-chevron {
    width: 10px;
    height: 6px;
    margin-left: 18px;
}
.tray-icon {
    width: 13px;
    height: 12px;
    margin-left: 7px;
}
.tray-chevron + .tray-icon {
    margin-left: 8px;
}
.lang {
    margin-left: 8px;
    font-size: 10px;
}
.clock {
    display: flex;
    flex-direction: column;
    align-items: center;
    width: 62px;
    margin-left: 5px;
    font-size: 10px;
    line-height: 15px;
}
.notif {
    position: relative;
    width: 14px;
    height: 14px;
    margin: 0 19px 0 11px;
}
.notif svg {
    width: 12px;
    height: 11px;
}
.notif-count {
    position: absolute;
    left: 5px;
    top: 5px;
    width: 12px;
    height: 12px;
    border: 1px solid #888;
    border-radius: 50%;
    background-color: #222;
    font-size: 8px;
    line-height: 12px;
    text-align: center;
}
```
